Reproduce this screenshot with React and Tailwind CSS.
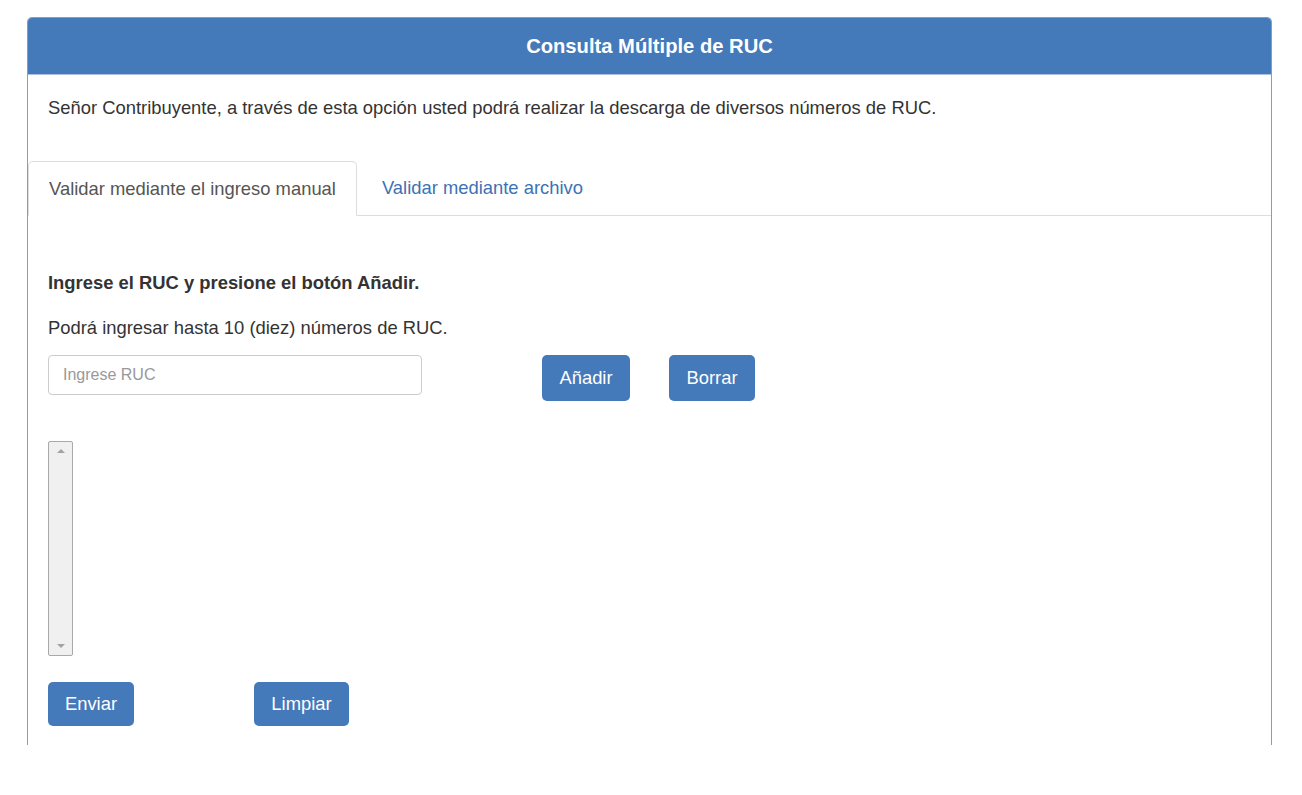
import React, { useState } from "react";

const btn =
  "bg-[#4479ba] text-white text-[18.4px] rounded-[5px] flex items-center justify-center";

export default function App() {
  const [tab, setTab] = useState("manual");
  const [ruc, setRuc] = useState("");

  return (
    <div className="min-h-screen bg-white pt-[17px] pl-[27px] pr-[30px] font-['Liberation_Sans',Arial,sans-serif] text-[#333]">
      <div className="h-[728px] border-x border-t border-[#7c9fd0] rounded-t-[5px] overflow-hidden">
        <div className="h-[57px] bg-[#4479ba] border-b border-[#a9c2e4] flex items-center justify-center text-white font-bold text-[20.2px]">
          Consulta Múltiple de RUC
        </div>

        <p className="px-[20px] pt-[21px] text-[18.4px] leading-[24px]">
          Señor Contribuyente, a través de esta opción usted podrá realizar la
          descarga de diversos números de RUC.
        </p>

        {/* tabs */}
        <div className="mt-[41px] flex border-b border-[#ddd] h-[55px]">
          <button
            onClick={() => setTab("manual")}
            className={
              tab === "manual"
                ? "px-[20px] text-[18.4px] text-[#555] bg-white border border-[#ddd] border-b-white rounded-t-[5px] -mb-px"
                : "px-[20px] text-[18.4px] text-[#3d72b4]"
            }
          >
            Validar mediante el ingreso manual
          </button>
          <button
            onClick={() => setTab("archivo")}
            className={
              tab === "archivo"
                ? "ml-[4px] px-[21px] text-[18.4px] text-[#555] bg-white border border-[#ddd] border-b-white rounded-t-[5px] -mb-px"
                : "ml-[4px] px-[21px] text-[18.4px] text-[#3d72b4]"
            }
          >
            Validar mediante archivo
          </button>
        </div>

        <div className="px-[20px] pt-[55px]">
          <p className="font-bold text-[18.4px] leading-[24px]">
            Ingrese el RUC y presione el botón Añadir.
          </p>
          <p className="mt-[21px] text-[18.4px] leading-[24px]">
            Podrá ingresar hasta 10 (diez) números de RUC.
          </p>

          <div className="mt-[15px] flex items-start">
            <input
              value={ruc}
              onChange={(e) => setRuc(e.target.value)}
              placeholder="Ingrese RUC"
              className="w-[374px] h-[40px] border border-[#ccc] rounded-[4px] px-[14px] text-[16px] placeholder:text-[#999] outline-none"
            />
            <button className={btn + " ml-[120px] w-[88px] h-[46px]"}>Añadir</button>
            <button className={btn + " ml-[39px] w-[86px] h-[46px]"}>Borrar</button>
          </div>

          {/* empty multi-select list */}
          <div className="mt-[40px] w-[25px] h-[215px] border border-[#a9a9a9] rounded-[2px] bg-[#f0f0f0] flex flex-col justify-between items-center py-[7px]">
            <div className="w-0 h-0 border-x-[4px] border-x-transparent border-b-[4px] border-b-[#a3a3a3]" />
            <div className="w-0 h-0 border-x-[4px] border-x-transparent border-t-[4px] border-t-[#a3a3a3]" />
          </div>

          <div className="mt-[26px] flex">
            <button className={btn + " w-[86px] h-[44px]"}>Enviar</button>
            <button className={btn + " ml-[120px] w-[95px] h-[44px]"}>Limpiar</button>
          </div>
        </div>
      </div>
    </div>
  );
}
